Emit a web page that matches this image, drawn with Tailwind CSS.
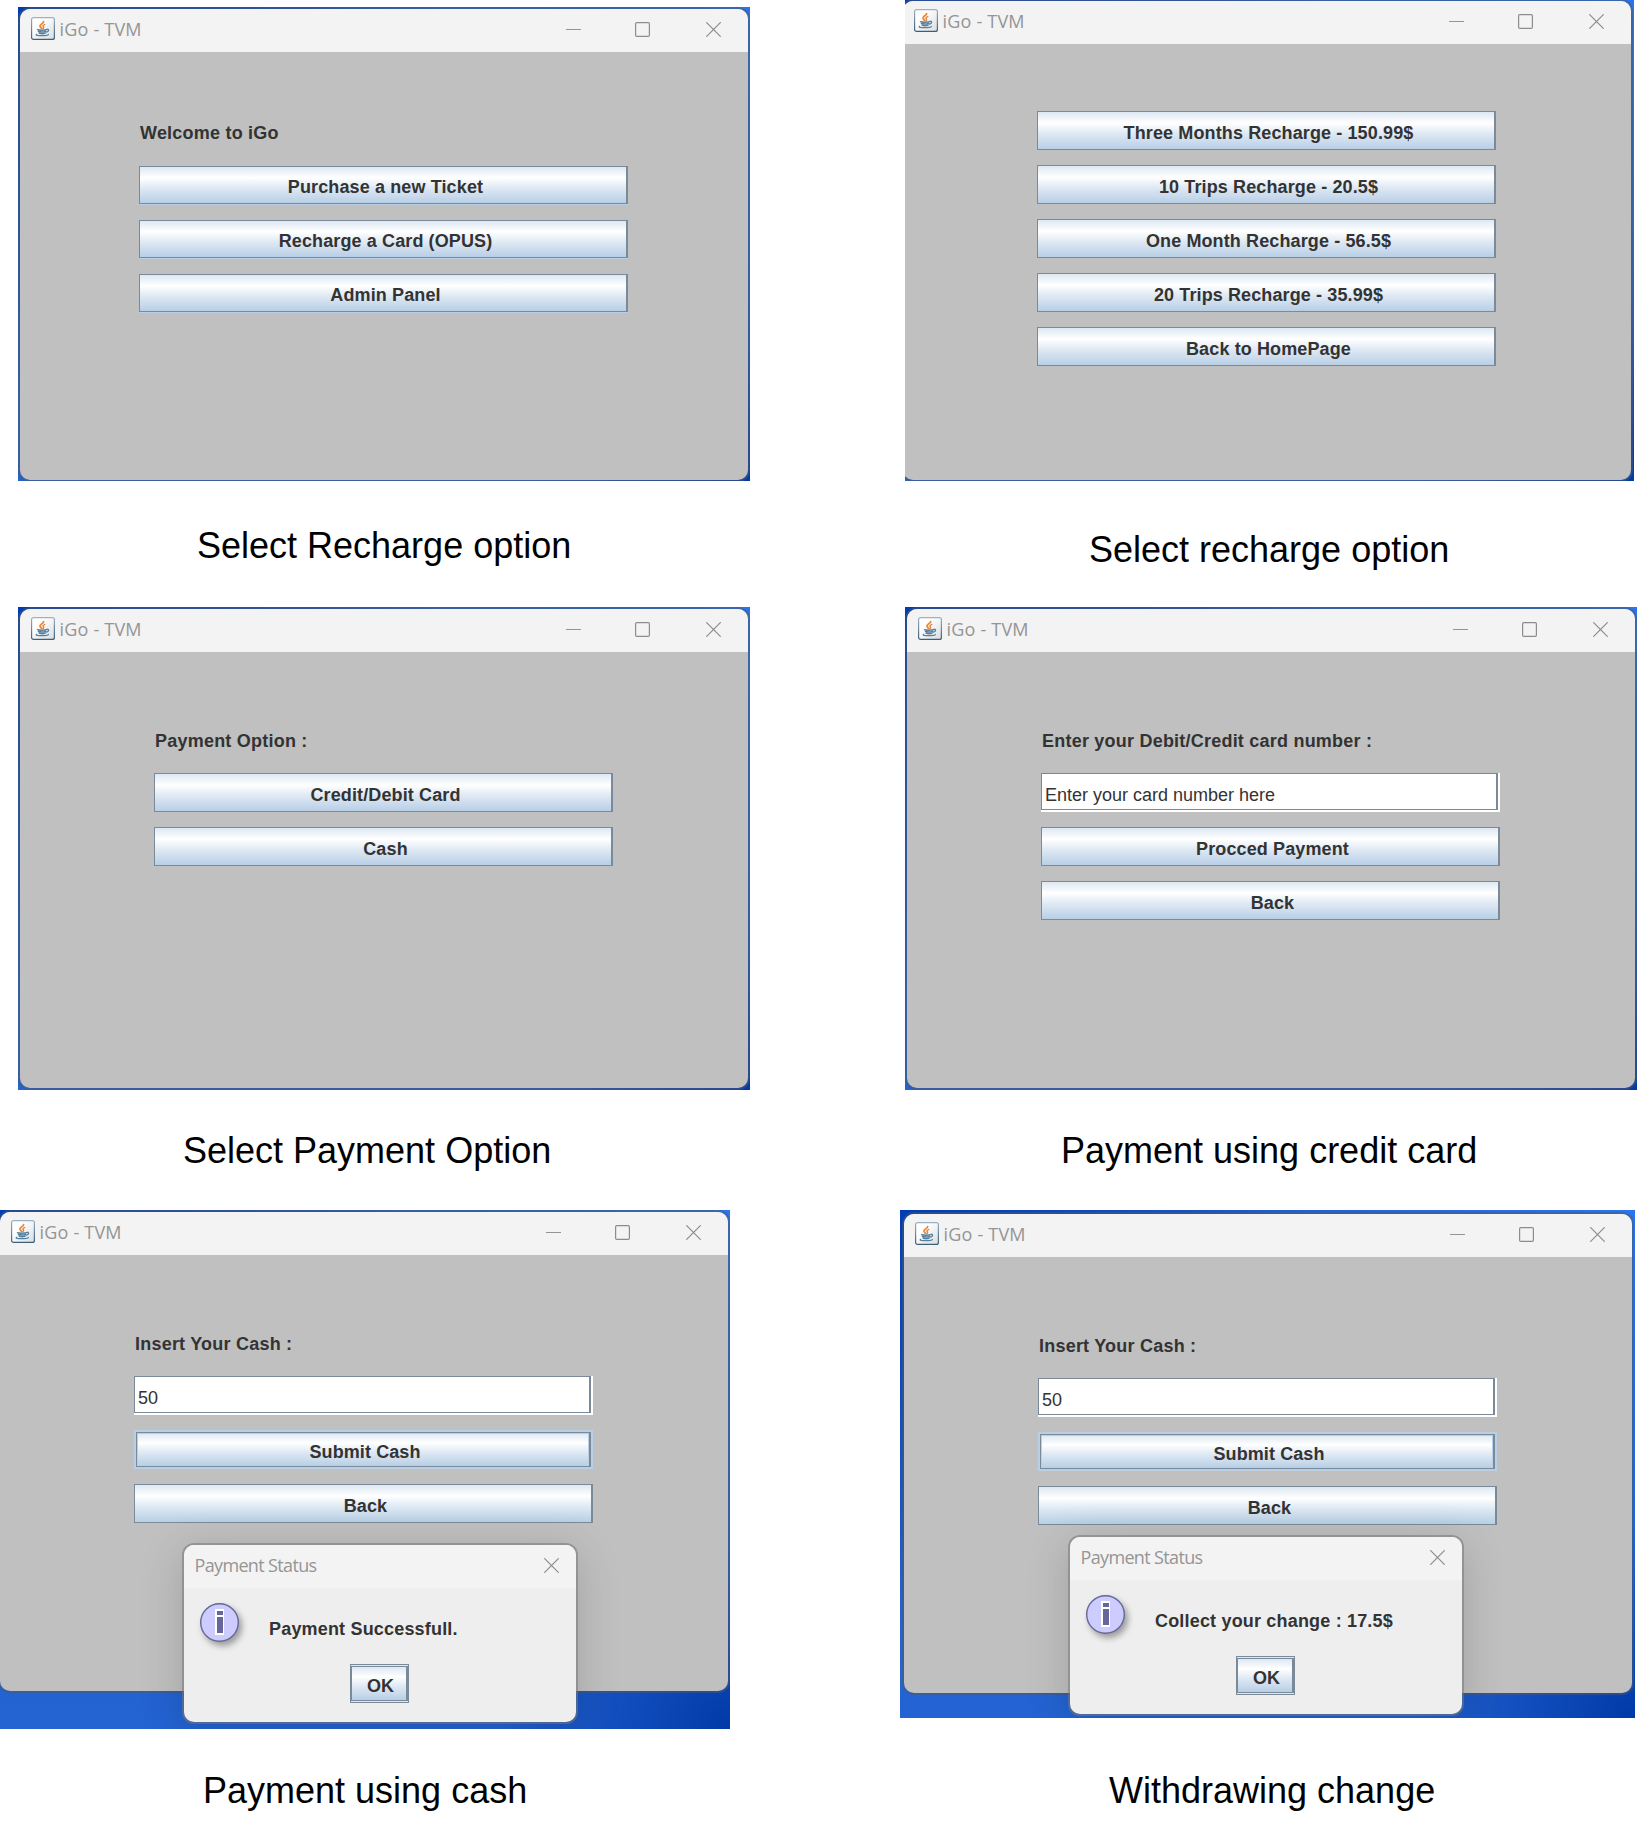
<!DOCTYPE html>
<html lang="en">
<head>
<meta charset="utf-8">
<title>iGo - TVM</title>
<script src="https://cdn.jsdelivr.net/npm/@tailwindcss/browser@4"></script>
</head>
<body class="bg-white w-[1638px] h-[1822px] overflow-hidden font-['Liberation_Sans',Arial,sans-serif]">
<svg class="absolute h-0 w-0">
  <defs>
    <linearGradient id="tile" x1="0" y1="0" x2="1" y2="1"><stop offset=".3" stop-color="#fff"/><stop offset="1" stop-color="#d9dde0"/></linearGradient>
    <linearGradient id="edge" x1="0" y1="0" x2="0" y2="1"><stop offset="0" stop-color="#9bb2c4"/><stop offset="1" stop-color="#3d5f78"/></linearGradient>
  </defs>
  <symbol id="java" viewBox="0 0 24 23">
    <rect x=".6" y=".6" width="22.8" height="21.8" rx="2" fill="url(#tile)" stroke="url(#edge)" stroke-width="1.2"/>
    <g fill="none" stroke-linecap="round">
      <path d="M12.600 4.600C12.800 6.300 9 7.200 9 8.900c0 1.100 1.200 1.500 1.500 2.600" stroke="#ee8a34" stroke-width="1.800"/>
      <path d="M13.800 7.500c-1.700.7-2.400 1.500-1.400 2.500.5.6.1 1.200-.5 1.600" stroke="#e8772a" stroke-width="1.300"/>
      <path d="M6.500 12.700c1.500.7 7.500.6 9.200 0M7.400 14.500c2 .6 5.500.5 7.300 0M8.200 16.300c1.700.5 4.300.5 5.800 0" stroke="#5580a0" stroke-width="1.400"/>
      <path d="M16 12.300c2.400-.3 2.100 2.200-.6 2.800" stroke="#5580a0" stroke-width="1.300"/>
      <path d="M5.800 17.400c-2.200 1 1.500 1.300 5 1.300 3.200 0 6.800-.3 6.600-1.300" stroke="#5580a0" stroke-width="1.200"/>
    </g>
  </symbol>
  <symbol id="min" viewBox="0 0 15 15"><path d="M0 7.500h15" stroke="#949494"/></symbol>
  <symbol id="max" viewBox="0 0 15 15"><rect x=".6" y=".6" width="13.800" height="13.800" rx="1.200" fill="none" stroke="#8c8c8c" stroke-width="1.200"/></symbol>
  <symbol id="close" viewBox="0 0 15 15"><path d="M.3.3l14.400 14.400M14.700.3L.3 14.700" stroke="#8c8c8c" stroke-width="1.200"/></symbol>
  <symbol id="info" viewBox="0 0 39 39">
    <circle cx="19.500" cy="19.500" r="18.800" fill="#ccccff" stroke="#666699" stroke-width="1.400"/>
    <path d="M15 6h9v26h-9z" fill="#fff"/>
    <path d="M17 8h6v4h-6zM17 14h6v16h-6z" fill="#666699"/>
  </symbol>
</svg>

<main class="flex">
  <div id="left" class="w-[900px] shrink-0"></div>
  <div id="right" class="w-[738px] shrink-0"></div>
</main>

<script>
const button = (text, cls = 'h-[39px]') =>
  `<button class="${cls} block w-full shrink-0 border border-r-2 border-[#7a8a99] bg-[linear-gradient(#dde8f3,#fff_30%,#dde8f3_60%,#b8cfe5)] pl-[5px] pt-[4px] text-center text-[18px] leading-[20px] font-bold tracking-[0.12px] text-[#333]">${text}</button>`;
const lined = text => button(text, 'h-[38px] shadow-[0_1px_0_#b8cfe5]');
const focused = text =>
  `<div class="h-[39px] border-2 border-[#b8cfe5] bg-[#b8cfe5]"><button class="block w-full h-[35px] border border-r-2 border-[#7a8a99] bg-[linear-gradient(#dde8f3,#fff_30%,#dde8f3_60%,#b8cfe5)] pl-1 pt-[4px] text-center text-[18px] leading-[20px] font-bold tracking-[0.1px] text-[#333] shadow-[inset_0_0_0_1px_#b8cfe5]">${text}</button></div>`;
const field = text =>
  `<div class="h-[39px] bg-white pr-[2px] pb-[2px]"><div class="flex h-[37px] items-center border border-r-2 border-[#7a8a99] pl-[3px] pt-[6px] text-[18px] leading-[20px] text-[#333]">${text}</div></div>`;
const label = text =>
  `<p class="h-[20px] pl-px text-[18px] leading-[20px] font-bold tracking-[0.22px] whitespace-nowrap text-[#333]">${text}</p>`;

const titleBar = `
  <header class="flex h-[43px] items-center bg-[#f3f3f3] pl-[11px] pr-[27px] pb-[3px]">
    <svg class="mb-px h-[23px] w-[24px]"><use href="#java"/></svg>
    <span class="ml-[4.5px] flex-1 font-['Open_Sans',sans-serif] text-[18px] leading-[24px] tracking-[0.2px] text-[#959595]">iGo - TVM</span>
    <svg class="mt-px h-[15px] w-[15px]"><use href="#min"/></svg>
    <svg class="mt-px ml-[54px] h-[15px] w-[15px]"><use href="#max"/></svg>
    <svg class="mt-px ml-[56px] h-[15px] w-[15px]"><use href="#close"/></svg>
  </header>`;

const dialog = (text, pos) => `
  <section class="absolute ${pos} h-[177px] w-[392px] overflow-hidden rounded-[10px] bg-[#eee] shadow-[0_0_0_2px_rgba(120,120,120,0.55),0_8px_44px_2px_rgba(0,0,0,0.16)]">
    <header class="flex h-[43px] items-center justify-between bg-[#f3f3f3] pl-[10.5px] pr-[17px] pb-[3px]">
      <span class="font-['Open_Sans',sans-serif] text-[18px] leading-[24px] tracking-[-0.65px] text-[#959595]">Payment Status</span>
      <svg class="h-[15px] w-[15px]"><use href="#close"/></svg>
    </header>
    <div class="flex h-[54px] pl-[16px] pt-[15px]">
      <svg class="h-[39px] w-[39px] shrink-0 overflow-visible drop-shadow-[3px_4px_3px_rgba(0,0,0,0.35)]"><use href="#info"/></svg>
      <p class="ml-[30px] pt-[16px] text-[18px] leading-[20px] font-bold tracking-[0.18px] whitespace-nowrap text-[#333]">${text}</p>
    </div>
    <div class="mt-[22px] ml-[166px] h-[39px] w-[59px] border border-[#7a8a99] bg-[#dde8f3] py-px">
      <button class="block h-[35px] w-full border border-r-2 border-[#7a8a99] bg-[linear-gradient(#dde8f3,#fff_30%,#dde8f3_60%,#b8cfe5)] pl-[3px] pt-[5px] text-center text-[18px] leading-[20px] font-bold text-[#333]">OK</button>
    </div>
  </section>`;

const shot = (box, win, body, items, overlay = '') => `
  <figure class="relative overflow-hidden ${box} bg-[radial-gradient(circle_at_0%_0%,#003cb4,transparent_45%),radial-gradient(circle_at_100%_0%,#2a74ee,transparent_50%),radial-gradient(circle_at_100%_100%,#003aa8,transparent_25%),linear-gradient(#1c5bcb,#2363d2)]">
    <div class="${win} w-[728px] overflow-hidden rounded-[10px] bg-[#c0c0c0] shadow-[0_0_0_2px_rgba(75,90,110,0.5)]">
      ${titleBar}
      <div class="${body}">${items}</div>
    </div>${overlay}
  </figure>`;
const caption = (cls, text) =>
  `<figcaption class="${cls} text-[36px] leading-[40px] whitespace-nowrap text-black">${text}</figcaption>`;

document.getElementById('left').innerHTML =
  shot('mt-[7px] ml-[18px] h-[474px] w-[732px]', 'mt-[2px] ml-[2px] h-[471px]', 'pt-[71px] pl-[119px] w-[608px]',
    label('Welcome to iGo') + '<div class="mt-[23px] flex flex-col gap-[16px]">' + lined('Purchase a new Ticket') + lined('Recharge a Card (OPUS)') + lined('Admin Panel') + '</div>') +
  caption('h-[126px] pt-[45px] pl-[197px]', 'Select Recharge option') +
  shot('ml-[18px] h-[483px] w-[732px]', 'mt-[2px] ml-[2px] h-[479px]', 'pt-[79px] pl-[134px] w-[593px]',
    label('Payment Option :') + '<div class="mt-[22px] flex flex-col gap-[15px]">' + button('Credit/Debit Card') + button('Cash') + '</div>') +
  caption('h-[120px] pt-[41px] pl-[183px]', 'Select Payment Option') +
  shot('h-[519px] w-[730px]', 'mt-[2px] h-[479px]', 'pt-[79px] pl-[134px] w-[593px]',
    label('Insert Your Cash :') + '<div class="mt-[22px] flex flex-col gap-[15px]">' + field('50') + focused('Submit Cash') + button('Back') + '</div>',
    dialog('Payment Successfull.', 'left-[184px] top-[335px]')) +
  caption('pt-[42px] pl-[203px]', 'Payment using cash');

document.getElementById('right').innerHTML =
  shot('ml-[5px] h-[481px] w-[729px]', 'mt-px -ml-[2px] h-[479px]', 'pt-[67px] pl-[134px] w-[593px]',
    '<div class="flex flex-col gap-[15px]">' + button('Three Months Recharge - 150.99$') + button('10 Trips Recharge - 20.5$') + button('One Month Recharge - 56.5$') + button('20 Trips Recharge - 35.99$') + button('Back to HomePage') + '</div>') +
  caption('h-[126px] pt-[49px] pl-[189px]', 'Select recharge option') +
  shot('ml-[5px] h-[483px] w-[732px]', 'mt-[2px] ml-[2px] h-[479px]', 'pt-[79px] pl-[134px] w-[593px]',
    label('Enter your Debit/Credit card number :') + '<div class="mt-[22px] flex flex-col gap-[15px]">' + field('Enter your card number here') + button('Procced Payment') + button('Back') + '</div>') +
  caption('h-[120px] pt-[41px] pl-[161px]', 'Payment using credit card') +
  shot('h-[508px] w-[735px]', 'mt-[4px] ml-[4px] h-[479px]', 'pt-[79px] pl-[134px] w-[593px]',
    label('Insert Your Cash :') + '<div class="mt-[22px] flex flex-col gap-[15px]">' + field('50') + focused('Submit Cash') + button('Back') + '</div>',
    dialog('Collect your change : 17.5$', 'left-[170px] top-[327px]')) +
  caption('pt-[53px] pl-[209px]', 'Withdrawing change');
</script>
</body>
</html>
